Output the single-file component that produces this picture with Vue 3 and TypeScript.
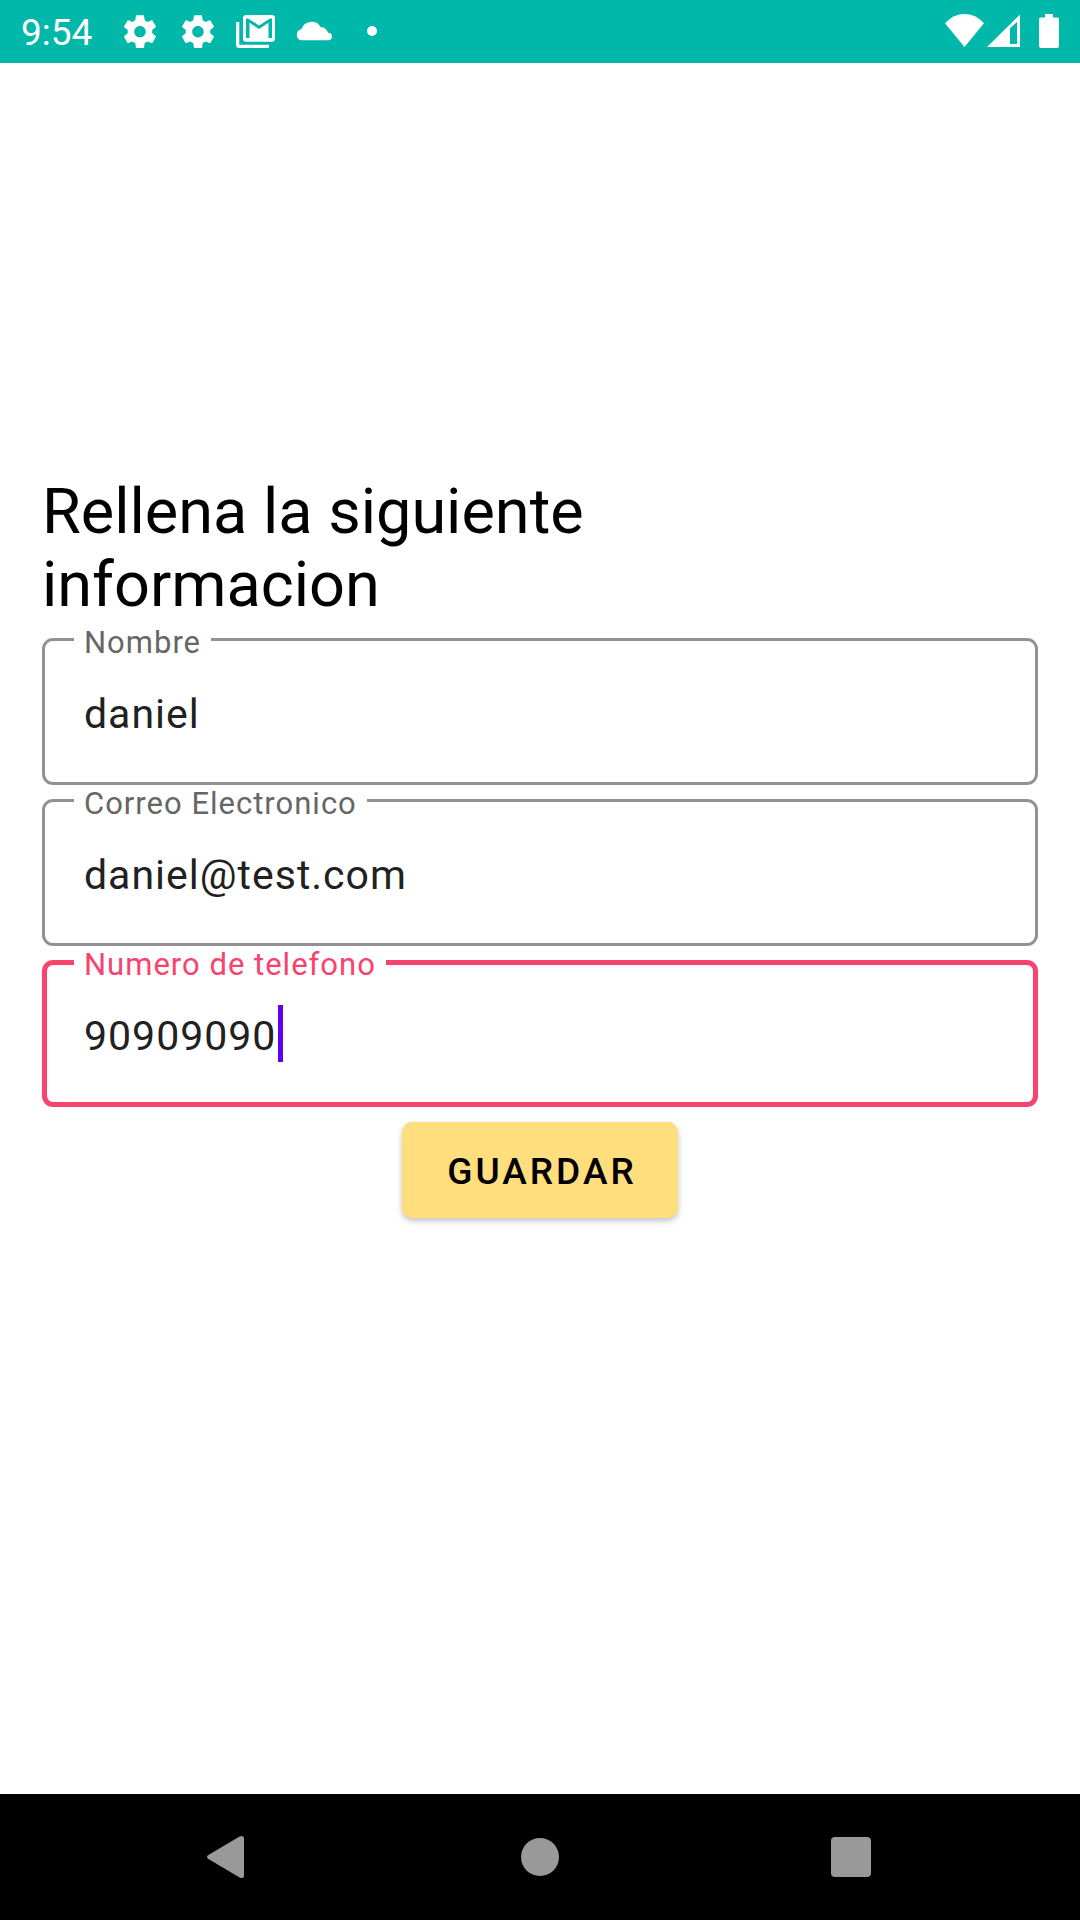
<script setup lang="ts">
import { reactive, ref } from 'vue'

interface Field {
  id: string
  label: string
  type: string
  value: string
}

const fields = reactive<Field[]>([
  { id: 'nombre', label: 'Nombre', type: 'text', value: 'daniel' },
  { id: 'correo', label: 'Correo Electronico', type: 'email', value: 'daniel@test.com' },
  { id: 'telefono', label: 'Numero de telefono', type: 'tel', value: '90909090' },
])

const active = ref('telefono')
</script>

<template>
  <div class="screen">
    <header class="status">
      <span class="time">9:54</span>
      <div class="notices">
        <svg v-for="n in 2" :key="n" width="40" height="63" viewBox="0 0 40 63" aria-hidden="true">
          <path
            fill="#fff"
            transform="translate(0.3 12) scale(1.64)"
            d="M19.43 12.98c.04-.32.07-.64.07-.98s-.03-.66-.07-.98l2.11-1.65c.19-.15.24-.42.12-.64l-2-3.46c-.12-.22-.39-.3-.61-.22l-2.49 1c-.52-.4-1.08-.73-1.69-.98l-.38-2.65C14.46 2.18 14.25 2 14 2h-4c-.25 0-.46.18-.49.42l-.38 2.65c-.61.25-1.17.59-1.69.98l-2.49-1c-.23-.09-.49 0-.61.22l-2 3.46c-.13.22-.07.49.12.64l2.11 1.65c-.04.32-.07.65-.07.98s.03.66.07.98l-2.11 1.65c-.19.15-.24.42-.12.64l2 3.46c.12.22.39.3.61.22l2.49-1c.52.4 1.08.73 1.69.98l.38 2.65c.03.24.24.42.49.42h4c.25 0 .46-.18.49-.42l.38-2.65c.61-.25 1.17-.59 1.69-.98l2.49 1c.23.09.49 0 .61-.22l2-3.46c.12-.22.07-.49-.12-.64l-2.11-1.65zM12 15.5c-1.93 0-3.5-1.57-3.5-3.5s1.57-3.5 3.5-3.5 3.5 1.57 3.5 3.5-1.57 3.500-3.500 3.500z"
          />
        </svg>
        <svg width="40" height="63" viewBox="0 0 40 63" aria-hidden="true">
          <path fill="#fff" d="M0 22h3.300v22.700H33V48H3.300A3.300 3.300 0 0 1 0 44.700z" />
          <rect fill="#fff" x="7" y="15" width="32" height="26.700" rx="3.300" />
          <path
            fill="#00b8a9"
            d="M10 38V18.500h2L23 25.500l11-7h2V38h-3.500V22.800L23 29l-9.500-6.200V38z"
          />
        </svg>
        <svg width="40" height="63" viewBox="0 0 40 63" aria-hidden="true">
          <path
            fill="#fff"
            d="M7.500 40.300A5.600 5.600 0 0 1 7.300 29.300A10.600 10.600 0 0 1 26.700 27.300A7 7 0 0 1 34 32.700A3.800 3.800 0 0 1 34.200 40.300z"
          />
        </svg>
        <svg width="40" height="63" viewBox="0 0 40 63" aria-hidden="true">
          <circle fill="#fff" cx="20" cy="31" r="5" />
        </svg>
      </div>
      <div class="system">
        <svg class="wifi" width="39" height="63" viewBox="0 0 39 63" aria-hidden="true">
          <path fill="#fff" d="M19.500 47L0 23.200Q8.500 14 19.500 14T39 23.200z" />
        </svg>
        <svg class="signal" width="33" height="63" viewBox="0 0 33 63" aria-hidden="true">
          <path fill="#fff" fill-rule="evenodd" d="M33 14.500V47H0zM23 28.200V44h7V22z" />
        </svg>
        <svg width="20" height="63" viewBox="0 0 20 63" aria-hidden="true">
          <path
            fill="#fff"
            d="M6 14h8v3.500h4.500a1.500 1.500 0 0 1 1.500 1.500v27a2 2 0 0 1-2 2H2a2 2 0 0 1-2-2V19a1.500 1.500 0 0 1 1.500-1.500H6z"
          />
        </svg>
      </div>
    </header>

    <main class="content">
      <h1>Rellena la siguiente<br />informacion</h1>
      <form @submit.prevent>
        <div
          v-for="field in fields"
          :key="field.id"
          class="field"
          :class="{ active: active === field.id }"
        >
          <input
            :id="field.id"
            v-model="field.value"
            :type="field.type"
            autocomplete="off"
            @focus="active = field.id"
          />
          <label :for="field.id">{{ field.label }}</label>
          <span v-if="active === field.id" class="caret"></span>
        </div>
        <button class="save" type="submit">GUARDAR</button>
      </form>
    </main>

    <nav class="navbar">
      <button type="button" aria-label="Atrás">
        <svg width="54" height="54" viewBox="0 0 54 54">
          <path
            fill="#999"
            d="M6 25.300L37.600 6.500Q42 4.600 42 8.500V45.500Q42 49.400 37.600 47.500L6 28.700Q4 27 6 25.300z"
          />
        </svg>
      </button>
      <button type="button" aria-label="Inicio">
        <svg width="54" height="54" viewBox="0 0 54 54"><circle fill="#999" cx="27" cy="27" r="19" /></svg>
      </button>
      <button type="button" aria-label="Recientes">
        <svg width="54" height="54" viewBox="0 0 54 54">
          <rect fill="#999" x="7" y="7" width="40" height="40" rx="4" />
        </svg>
      </button>
    </nav>
  </div>
</template>

<style>
body {
  margin: 0;
  background: #fff;
}
</style>

<style scoped>
.screen {
  display: flex;
  flex-direction: column;
  min-height: 100vh;
  font-family: Roboto, sans-serif;
  color: #000;
}

svg {
  display: block;
}

.status {
  display: flex;
  align-items: center;
  height: 63px;
  padding: 0 21px;
  background: #00b8a9;
  color: #fff;
}

.time {
  min-width: 99px;
  padding-top: 2px;
  font-size: 37px;
  line-height: 43px;
}

.notices {
  display: flex;
  gap: 18px;
}

.system {
  display: flex;
  margin-left: auto;
}

.wifi {
  margin-right: 3px;
}

.signal {
  margin-right: 19px;
}

.content {
  flex: 1;
  padding: 412px 42px 0;
}

h1 {
  margin: 0 0 17px;
  font-size: 63px;
  font-weight: 400;
  line-height: 73px;
}

form {
  display: flex;
  flex-direction: column;
  gap: 14px;
}

.field {
  position: relative;
}

.field input {
  display: block;
  box-sizing: border-box;
  width: 100%;
  height: 147px;
  margin: 0;
  padding: 4px 39px 0;
  border: 3px solid #929292;
  border-radius: 11px;
  outline: none;
  background: #fff;
  color: #212121;
  font-family: inherit;
  font-size: 41px;
  letter-spacing: 1px;
  caret-color: transparent;
}

.field label {
  position: absolute;
  top: -14px;
  left: 32px;
  padding: 0 10px;
  background: #fff;
  color: #666;
  font-size: 31px;
  line-height: 37px;
  letter-spacing: 1px;
}

.field.active input {
  padding: 4px 37px 0;
  border: 5px solid #f8436e;
}

.field.active label {
  color: #f8436e;
}

.caret {
  position: absolute;
  top: 45px;
  left: 236px;
  width: 5px;
  height: 57px;
  background: #6200ee;
}

.save {
  align-self: center;
  height: 96px;
  margin-top: 1px;
  padding: 2px 41px 0 45px;
  border: 0;
  border-radius: 10px;
  background: #ffde7d;
  box-shadow: 0 3px 6px rgba(0, 0, 0, 0.24);
  color: #000;
  font-family: inherit;
  font-size: 37px;
  font-weight: 500;
  letter-spacing: 3px;
}

.navbar {
  display: flex;
  height: 126px;
  padding: 0 74px;
  background: #000;
}

.navbar button {
  display: flex;
  flex: 1;
  align-items: center;
  justify-content: center;
  padding: 0;
  border: 0;
  background: none;
}
</style>
